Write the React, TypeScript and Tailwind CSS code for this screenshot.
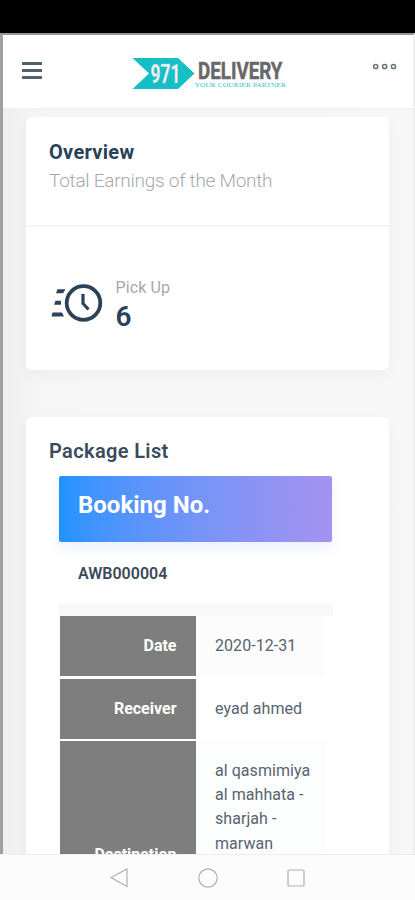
import type { ReactNode } from 'react';

const rows = [
  { label: 'Date', value: ['2020-12-31'], height: 'h-[60px]', bg: 'bg-[#fcfcfc]' },
  { label: 'Receiver', value: ['eyad ahmed'], height: 'h-[60px]', bg: 'bg-white' },
  {
    label: 'Destination',
    value: ['al qasmimiya', 'al mahhata -', 'sharjah -', 'marwan'],
    height: 'h-[228px]',
    bg: 'bg-[#fcfdfd]',
  },
];

function Logo() {
  return (
    <svg width="158" height="36" viewBox="0 0 158 36" className="shrink-0">
      <path d="M1.500 3H47L63.500 18.500L47 34H1.500L18 18.500Z" fill="#16bec6" />
      <text x="19.500" y="27.500" fontSize="26" fontWeight="700" fill="#f4f4f4" stroke="#a3d3d5" strokeWidth=".5" textLength="30" lengthAdjust="spacingAndGlyphs">971</text>
      <text x="67" y="24" fontSize="23.500" fontWeight="700" fill="#68686a" stroke="#68686a" strokeWidth=".5" textLength="84.500" lengthAdjust="spacingAndGlyphs">DELIVERY</text>
      <text x="63.500" y="32.300" fontSize="6" fill="#35c5cb" fontFamily="Liberation Serif, serif" textLength="91.500" lengthAdjust="spacingAndGlyphs">YOUR COURIER PARTNER</text>
    </svg>
  );
}

function Header() {
  return (
    <header className="h-[74px] shrink-0 bg-white border-b border-[#f0f0f0] flex pl-[19px] pr-[14px]">
      <div className="w-[20px] mt-[27px] flex flex-col gap-[4px]">
        <span className="h-[3px] bg-[#53616e]" />
        <span className="h-[3px] bg-[#53616e]" />
        <span className="h-[3px] bg-[#53616e]" />
      </div>
      <div className="ml-[89px] mt-[20px]">
        <Logo />
      </div>
      <svg width="26" height="8" viewBox="0 0 26 8" className="ml-auto mt-[28px]" fill="none" stroke="#68727b" strokeWidth="1.500">
        <circle cx="2.700" cy="3.500" r="2.100" />
        <circle cx="11.600" cy="3.500" r="2.100" />
        <circle cx="20.500" cy="3.500" r="2.100" />
      </svg>
    </header>
  );
}

function Card({ children, className }: { children: ReactNode; className: string }) {
  return (
    <section className={`shrink-0 rounded-md bg-white shadow-[0_5px_14px_rgba(0,0,0,0.04)] ${className}`}>
      {children}
    </section>
  );
}

function ClockIcon() {
  return (
    <svg width="54" height="40" viewBox="0 0 54 40" fill="none" stroke="#2b4359">
      <circle cx="33.500" cy="20" r="16.800" strokeWidth="3.800" />
      <path d="M33 11V20.500L38.500 26.500" strokeWidth="3.200" />
      <path d="M7.500 6.200H15.500L13 10.300H6ZM5.500 17.800H11V21.800H4ZM2.500 29.600H12L14 33.600H1.500Z" fill="#2b4359" stroke="none" />
    </svg>
  );
}

function Overview() {
  return (
    <Card className="h-[253px]">
      <div className="h-[110px] border-b-2 border-[#f4f4f4] pl-[23px] pt-[21px]">
        <h2 className="text-[20px] leading-[28px] font-bold tracking-[0.3px] text-[#2a4158]">Overview</h2>
        <p className="mt-px text-[19px] leading-[28px] font-light tracking-[-0.26px] text-[#a5a9ac]">Total Earnings of the Month</p>
      </div>
      <div className="flex pl-[24px] pt-[49px]">
        <div className="pt-[7px]">
          <ClockIcon />
        </div>
        <div className="ml-[11.500px]">
          <p className="text-[16px] leading-[24px] tracking-[0.1px] text-[#a5a9ac]">Pick Up</p>
          <p className="mt-px text-[28px] leading-[32px] font-semibold text-[#2a4158]">6</p>
        </div>
      </div>
    </Card>
  );
}

function PackageList() {
  return (
    <Card className="mt-[47px] h-[600px] pl-[23px] pt-[20px]">
      <h2 className="text-[20px] leading-[28px] font-semibold tracking-[0.36px] text-[#3a4b5c]">Package List</h2>
      <div className="ml-[10px] mt-[11px] h-[66px] w-[273px] rounded-[2px] bg-linear-to-r from-[#1e93ff] to-[#a592f0] pl-[19px] pt-[11px] shadow-[0_7px_12px_rgba(90,120,255,0.1)]">
        <h3 className="text-[24px] leading-[36px] font-bold text-white">Booking No.</h3>
      </div>
      <p className="ml-[29px] flex h-[62px] items-center pt-px text-[16px] font-semibold text-[#3a4958]">AWB000004</p>
      <div className="ml-[9px] h-[12px] w-[275px] bg-[#f8f8f8]" />
      <div className="ml-[11px] flex w-[266px] flex-col gap-[2.500px]">
        {rows.map((row) => (
          <div key={row.label} className={`flex ${row.height} ${row.bg}`}>
            <div className="w-[135.500px] flex items-center justify-end bg-[#7e7e7e] pr-[19px] text-[16px] font-bold text-white">
              {row.label}
            </div>
            <div className="flex-1 pl-[19.500px] pt-[18px] text-[16px] leading-[24.200px] tracking-[0.05px] text-[#58636f]">
              {row.value.map((line) => (
                <p key={line}>{line}</p>
              ))}
            </div>
          </div>
        ))}
      </div>
    </Card>
  );
}

function NavBar() {
  return (
    <nav className="h-[46px] shrink-0 border-t border-[#eeeeee] bg-[#fcfcfc] flex justify-center">
      <svg width="415" height="45" viewBox="0 0 415 45" fill="none" stroke="#b0b0b0" strokeWidth="1.200">
        <path d="M111 22.500L127 14V31.500Z" />
        <circle cx="208" cy="23" r="9.200" />
        <rect x="288" y="15" width="16" height="16" rx="1" />
      </svg>
    </nav>
  );
}

export default function App() {
  return (
    <div className="w-[415px] h-[900px] overflow-hidden flex flex-col bg-black font-[Roboto,sans-serif]">
      <div className="h-[33px] shrink-0 bg-black" />
      <div className="h-[821px] shrink-0 overflow-hidden flex flex-col border-t-2 border-l-3 border-r-2 border-t-[#969696] border-l-[#a0a0a0] border-r-[#eeeeee] bg-[#f6f6f6]">
        <Header />
        <main className="flex flex-col pl-[23px] pr-[24px] pt-[8px] bg-linear-to-r from-[#eeeeee] via-[#f6f6f6] via-10% to-[#f7f7f7]">
          <Overview />
          <PackageList />
        </main>
      </div>
      <NavBar />
    </div>
  );
}
